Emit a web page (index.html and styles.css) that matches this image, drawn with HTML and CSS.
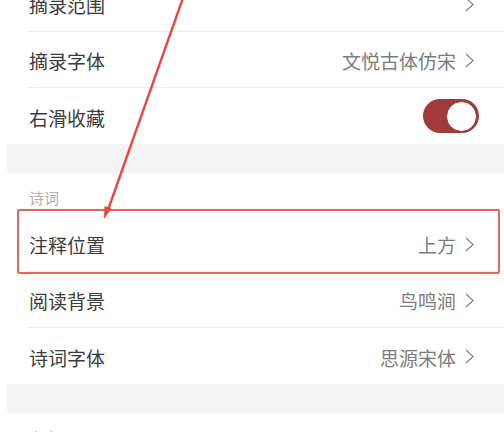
FILE: index.html
```html
<!DOCTYPE html>
<html lang="zh-CN">
<head>
<meta charset="utf-8">
<link rel="stylesheet" href="styles.css">
</head>
<body>
<div class="page">
  <div class="group first">
    <div class="row"><span class="label">摘录范围</span><span class="value"><svg class="chev" viewBox="0 0 9 15"><polyline points="1,1 8,7.5 1,14"/></svg></span></div>
    <div class="row"><span class="label">摘录字体</span><span class="value">文悦古体仿宋<svg class="chev" viewBox="0 0 9 15"><polyline points="1,1 8,7.5 1,14"/></svg></span></div>
    <div class="row toggle-row"><span class="label">右滑收藏</span><span class="toggle"><span class="knob"></span></span></div>
  </div>
  <div class="band"></div>
  <div class="section-title">诗词</div>
  <div class="group">
    <div class="row"><span class="label">注释位置</span><span class="value">上方<svg class="chev" viewBox="0 0 9 15"><polyline points="1,1 8,7.5 1,14"/></svg></span></div>
    <div class="row"><span class="label">阅读背景</span><span class="value">鸟鸣涧<svg class="chev" viewBox="0 0 9 15"><polyline points="1,1 8,7.5 1,14"/></svg></span></div>
    <div class="row"><span class="label">诗词字体</span><span class="value">思源宋体<svg class="chev" viewBox="0 0 9 15"><polyline points="1,1 8,7.5 1,14"/></svg></span></div>
  </div>
  <div class="band"></div>
  <div class="section-title">文章</div>

  <div class="highlight"></div>
  <svg class="arrow" width="504" height="432" viewBox="0 0 504 432">
    <line x1="183" y1="-2" x2="108" y2="210"/>
    <polygon points="104,219 104.5,206 111.5,208.5"/>
  </svg>
</div>
</body>
</html>
```

FILE: styles.css
```css
* { box-sizing: border-box; }
html, body {
  margin: 0;
  padding: 0;
  background: #ffffff;
}
body {
  width: 504px;
  height: 432px;
  overflow: hidden;
  font-family: "Noto Sans CJK SC", "Noto Sans", sans-serif;
}
.page {
  position: relative;
  margin-top: -24px;
  padding-left: 7px;
}
.group {
  display: flex;
  flex-direction: column;
  padding-left: 20px;
}
.row {
  height: 56px;
  display: flex;
  align-items: center;
  justify-content: space-between;
  border-bottom: 1px solid #ededed;
  padding-left: 2px;
  padding-right: 30px;
}
.row:last-child {
  border-bottom: none;
}
.label {
  font-size: 19px;
  color: #3c3c3c;
  line-height: 24px;
  padding-top: 3px;
}
.value {
  display: flex;
  align-items: center;
  font-size: 19px;
  color: #7c7c7c;
  line-height: 24px;
  padding-top: 3px;
}
.chev {
  width: 9px;
  height: 15px;
  margin-left: 9px;
  margin-top: -2px;
}
.chev polyline {
  fill: none;
  stroke: #8a8a8a;
  stroke-width: 1.3;
}
.toggle-row {
  padding-right: 25px;
}
.toggle {
  width: 56px;
  height: 34px;
  border-radius: 17px;
  background: #a23a3b;
  display: flex;
  align-items: center;
  justify-content: flex-end;
  padding-right: 2px;
}
.knob {
  width: 31px;
  height: 31px;
  border-radius: 50%;
  background: #ffffff;
  border: 1px solid #8e3535;
}
.band {
  height: 29px;
  background: #f4f4f4;
  border-bottom: 1px solid #ececec;
}
.section-title {
  height: 43px;
  padding-left: 22px;
  padding-top: 17px;
  font-size: 15px;
  line-height: 16px;
  color: #b0b0b0;
}
.highlight {
  position: absolute;
  left: 17px;
  top: 233px;
  width: 483px;
  height: 65px;
  border: 2px solid #e2685d;
  border-radius: 2px;
}
.arrow {
  position: absolute;
  left: 0;
  top: 24px;
  overflow: visible;
}
.arrow line {
  stroke: #e9473d;
  stroke-width: 2.4;
  stroke-linecap: round;
}
.arrow polygon {
  fill: #e9473d;
}
```
